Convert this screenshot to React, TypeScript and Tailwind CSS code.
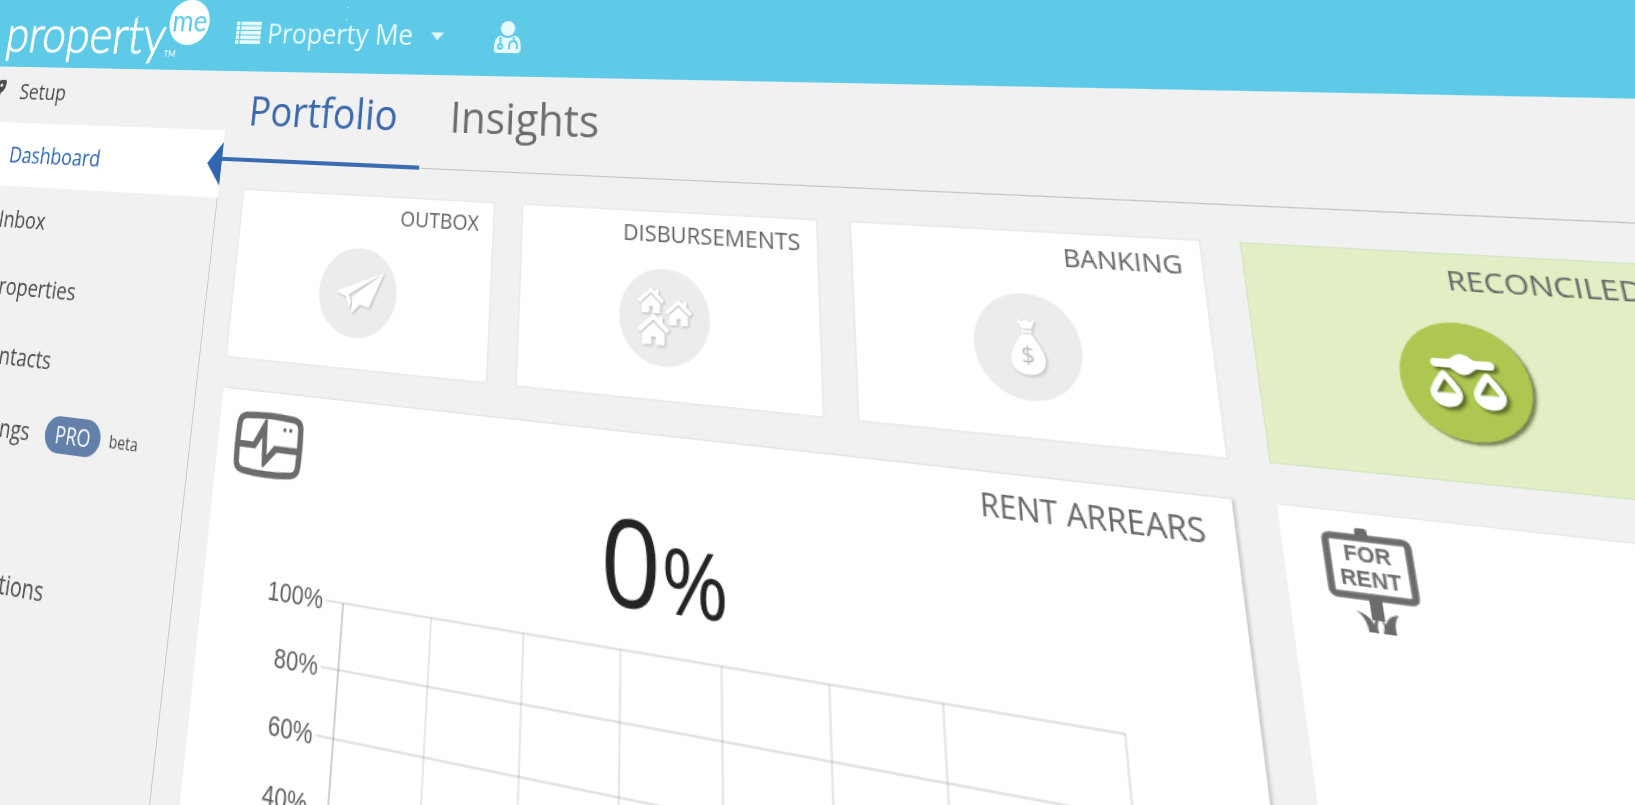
import type { ReactNode } from "react";
import { FaRocket } from "react-icons/fa";

const navItems = [
  { label: "Inbox" },
  { label: "Properties" },
  { label: "Contacts" },
  { label: "Listings", badge: "PRO", note: "beta" },
];

function PlaneIcon() {
  return (
    <svg viewBox="0 0 82 82" className="size-full" fill="#fff" aria-hidden="true">
      <path d="M68 21 18 41l11 4 39-24z" />
      <path d="M29 43.5l4 13 2-7-3-6z" />
      <path d="M68 21 36 45v15.5l8.500-9L54 54z" />
    </svg>
  );
}

function House({ x, y, s }: { x: number; y: number; s: number }) {
  return (
    <g transform={`translate(${x} ${y}) scale(${s})`}>
      <path d="M1 12.5 12 2.5l11 10" fill="none" stroke="#fff" strokeWidth="3.200" />
      <path d="M16 2h3v6l-3-2z" />
      <path d="M12 6.5l8.500 7.500V22H14v-5.500h-3.500V22h-7v-8z" />
    </g>
  );
}

function HousesIcon() {
  return (
    <svg viewBox="0 0 82 82" className="size-full" fill="#fff" aria-hidden="true">
      <House x={17} y={16} s={1} />
      <House x={42} y={25} s={1} />
      <House x={17} y={38} s={1.2} />
    </svg>
  );
}

function MoneyBagIcon() {
  return (
    <svg viewBox="0 0 82 82" className="size-full" fill="#fff" aria-hidden="true">
      <path d="M34 20l4 2 3-2 3 2 4-2-3 7.500h-8z" />
      <path d="M37 28.500h8v2h-8z" />
      <path d="M37 31.500h8c3 6 9 12 9 19 0 8-5 12-13 12s-13-4-13-12c0-7 6-13 9-19z" />
      <text
        x="41"
        y="54"
        textAnchor="middle"
        fontSize="18"
        fill="#bdbdbd"
        className="font-['Open_Sans',sans-serif]"
      >
        $
      </text>
    </svg>
  );
}

function ScalesIcon() {
  return (
    <svg viewBox="0 0 82 82" className="size-full" fill="#fff" aria-hidden="true">
      <path d="M24 26h8c3 0 4-4 9-4s6 4 9 4h8a3 3 0 0 1 0 6h-8c-3 0-4 4.500-9 4.500S35 32 32 32h-8a3 3 0 0 1 0-6z" />
      <path
        fillRule="evenodd"
        d="M28 34c1.500 0 10 11.500 10 16 0 5.500-4.500 9.500-10 9.500s-10-4-10-9.500c0-4.500 8.500-16 10-16zm0 6-6 9.500h12z"
      />
      <path
        fillRule="evenodd"
        d="M55 34c1.500 0 10 11.500 10 16 0 5.500-4.500 9.500-10 9.500s-10-4-10-9.500c0-4.500 8.500-16 10-16zm0 6-6 9.500h12z"
      />
    </svg>
  );
}

function MonitorIcon() {
  return (
    <svg
      viewBox="0 0 70 56"
      className="h-[58px] w-[73px]"
      fill="none"
      stroke="#6c6c6c"
      strokeWidth="5.500"
      aria-hidden="true"
    >
      <path d="M10 4.500Q35 1.500 60 4.500q6 1 6.500 7 1 16 0 32-.5 6-6.500 7-25 3-50 0-6-1-6.500-7-1-16 0-32 .5-6 6.500-7z" />
      <path
        d="M4 26h15L30 6h2l2 30 7-8.500h25V33H44L32 46h-2l-2-24-6 9.500H4z"
        fill="#6c6c6c"
        stroke="none"
      />
      <path d="M49 13.500h3M55 13.500h3" strokeWidth="3" />
    </svg>
  );
}

function ForRentIcon() {
  return (
    <svg viewBox="0 0 57 68" className="h-[68px] w-[57px]" fill="#6c6c6c" aria-hidden="true">
      <rect x="2.500" y="6.500" width="52" height="38" rx="3" fill="none" stroke="#6c6c6c" strokeWidth="4.500" />
      <path d="M22 5V2q0-2 2-2h4q2 0 2 2v3zM25 46h8v13h-8z" />
      <path d="M16 54q7 2 9 6l1 2q0-4 4-5-3 4-2 10h-6q0-8-6-13zM42 54q-6 1-8 5l-1 2q-1-3-3-4 3 4 1 10h8q-1-8 3-13z" />
      <g
        className="font-['Liberation_Sans',Arial,sans-serif] font-bold"
        fontSize="14"
        textAnchor="middle"
      >
        <text x="28" y="22">FOR</text>
        <text x="28" y="38">RENT</text>
      </g>
    </svg>
  );
}

function ListIcon() {
  return (
    <svg viewBox="0 0 30 24" className="h-6 w-[30px]" fill="currentColor" aria-hidden="true">
      {[0, 5, 10, 15, 20].map((y) => (
        <g key={y}>
          <rect x="0" y={y} width="4" height="3.900" />
          <rect x="5.500" y={y} width="24.500" height="3.900" />
        </g>
      ))}
    </svg>
  );
}

function UserIcon() {
  return (
    <svg viewBox="0 0 28 32" className="h-8 w-7" fill="currentColor" aria-hidden="true">
      <circle cx="14" cy="7.500" r="7.500" />
      <path d="M7 14.500q7 5 14 0 7 1 7 11.500v2q0 4-4 4H4q-4 0-4-4v-2q0-10.500 7-11.500z" />
      <g fill="none" stroke="#5ecae8" strokeWidth="2">
        <path d="M6.500 16v7.500" />
        <circle cx="6.500" cy="25.500" r="2.200" />
        <path d="M20.500 16v4M16 28v-3.500q0-4.500 4-4.500t4 4.500V28" />
      </g>
    </svg>
  );
}

function StatusCard({
  title,
  active = false,
  children,
}: {
  title: string;
  active?: boolean;
  children: ReactNode;
}) {
  return (
    <a
      href="#"
      className={
        active
          ? "flex h-[158px] flex-col items-center bg-[#e3eec4] pt-[7px] shadow-[0_0_0_1px_#d3e6c6]"
          : "flex h-[158px] flex-col items-center bg-white pt-[7px] shadow-[0_0_2px_1px_#e6e6e6]"
      }
    >
      <h2 className="self-end pr-[14px] text-[20px] leading-6 text-[#646464]">{title}</h2>
      <span
        className={
          active
            ? "mt-[18px] block size-[82px] rounded-full bg-[#adc750] shadow-[2px_2px_2px_rgba(60,70,30,0.65)]"
            : "mt-[18px] block size-[82px] rounded-full bg-[#ececec]"
        }
      >
        <span
          className={
            active
              ? "block size-full drop-shadow-[2px_2px_1px_rgba(50,60,20,0.7)]"
              : "block size-full drop-shadow-[1px_1px_1px_rgba(0,0,0,0.22)]"
          }
        >
          {children}
        </span>
      </span>
    </a>
  );
}

function ArrearsChart() {
  const ticks = ["100%", "80%", "60%", "40%", "20%", "0%"];
  const columns = [229, 314, 399, 483, 568, 653, 780];
  return (
    <svg viewBox="0 0 870 320" className="block w-full" role="img" aria-label="Rent arrears by period">
      {ticks.map((tick, i) => (
        <g key={tick}>
          <path d={`M127 ${21 + i * 52}H780`} stroke="#000" strokeOpacity="0.14" strokeWidth="1.300" />
          <text
            x="124"
            y={28 + i * 52}
            textAnchor="end"
            fontSize="22"
            fill="#5e5e5e"
            className="font-['Liberation_Sans',Arial,sans-serif]"
          >
            {tick}
          </text>
        </g>
      ))}
      <path d="M144 21V281" stroke="#000" strokeOpacity="0.28" strokeWidth="1.300" />
      {columns.map((x) => (
        <path key={x} d={`M${x} 21V281`} stroke="#000" strokeOpacity="0.14" strokeWidth="1.300" />
      ))}
    </svg>
  );
}

export default function App() {
  return (
    <div className="h-screen overflow-hidden bg-[#f1f1f1] font-['Open_Sans','Noto_Sans',sans-serif]">
      <div className="flex min-h-[960px] w-full origin-top-left flex-col bg-[#f1f1f1] [transform:matrix3d(0.801667,-0.0006,0,-0.00024633,-0.166333,0.961667,0,-0.000246667,0,0,1,0,-47.524,-22.282,0,1.15551)]">
        <header className="flex h-[100px] items-center bg-[#5ecae8] pt-[18px] text-[#e6fbff]">
          <a href="#" className="flex w-[380px] items-center pl-[82px] text-white">
            <span className="pt-1 font-['Lato',sans-serif] text-[57px] leading-[54px] font-light [-webkit-text-stroke:1px_white]">
              property
            </span>
            <span className="mb-2 self-end font-['Lato',sans-serif] text-[10px] leading-none">TM</span>
            <span className="mb-[22px] -ml-3 flex size-[50px] shrink-0 items-center justify-center rounded-full bg-white pb-1 font-['Lato',sans-serif] text-[32px] leading-[30px] text-[#5ecae8]">
              me
            </span>
          </a>
          <button type="button" className="flex items-center text-[29px] leading-9">
            <ListIcon />
            <span className="ml-2">Property Me</span>
            <svg viewBox="0 0 14 8" className="mt-1 ml-5 h-2 w-3.5" fill="currentColor" aria-hidden="true">
              <path d="M0 0h14L7 8z" />
            </svg>
          </button>
          <button type="button" aria-label="Account" className="mt-1 ml-[54px]">
            <UserIcon />
          </button>
        </header>

        <div className="flex flex-1">
          <nav className="w-[380px] shrink-0 border-r border-[#c6c6c6] text-[23px] text-[#4c4c4c]">
            <a href="#" className="-mr-px flex h-[62px] items-center gap-5 bg-[#f1f1f1] pb-2 pl-[69px]">
              <FaRocket className="size-6" />
              Setup
            </a>
            <a
              href="#"
              className="-mr-px flex h-[68px] items-center justify-between bg-white pl-[113px] text-[#2f66b0]"
            >
              Dashboard
              <svg viewBox="0 0 17 44" className="h-11 w-[17px]" fill="#2f66b0" aria-hidden="true">
                <path d="M17 0v44L0 22z" />
              </svg>
            </a>
            {navItems.map((item) => (
              <a key={item.label} href="#" className="flex h-[68px] items-center pl-[113px] last-of-type:mt-0">
                {item.label}
                {item.badge && (
                  <span className="ml-[19px] rounded-full bg-[#6380ab] px-3 text-[21px] leading-[34px] font-medium text-white">
                    {item.badge}
                  </span>
                )}
                {item.note && <span className="ml-2.5 text-[16px]">{item.note}</span>}
              </a>
            ))}
            <a href="#" className="mt-[70px] flex h-[68px] items-center pl-[114px]">
              Inspections
            </a>
          </nav>

          <main className="flex-1">
            <div className="flex gap-1 border-b border-[#c4c4c4] text-[42px] leading-[56px]">
              <a href="#" className="-mb-[2px] border-b-4 border-[#3a6cb2] px-[26px] pt-3 pb-[21px] text-[#3a69ac]">
                Portfolio
              </a>
              <a href="#" className="px-[26px] pt-3 text-[#6c6c6c]">
                Insights
              </a>
            </div>

            <div className="grid grid-cols-4 gap-x-[30px] gap-y-[29px] pt-[29px] pr-[55px] pl-[30px]">
              <StatusCard title="OUTBOX">
                <PlaneIcon />
              </StatusCard>
              <StatusCard title="DISBURSEMENTS">
                <HousesIcon />
              </StatusCard>
              <StatusCard title="BANKING">
                <MoneyBagIcon />
              </StatusCard>
              <StatusCard title="RECONCILED" active>
                <ScalesIcon />
              </StatusCard>

              <section className="col-span-3 bg-white shadow-[2px_0_2px_rgba(0,0,0,0.16)]">
                <div className="flex h-[53px] items-start justify-between pl-[18px]">
                  <span className="pt-[17px]">
                    <MonitorIcon />
                  </span>
                  <h2 className="pt-2 pr-5 text-[23px] leading-[30px] text-[#646464]">RENT ARREARS</h2>
                </div>
                <p className="text-center text-[92px] leading-[92px] text-[#242424]">
                  0<span className="text-[68px] leading-none">%</span>
                </p>
                <ArrearsChart />
              </section>

              <section className="bg-white pt-2.5 pl-[26px] shadow-[1px_0_2px_rgba(0,0,0,0.1)]" aria-label="Vacancies">
                <ForRentIcon />
              </section>
            </div>
          </main>
        </div>
      </div>
    </div>
  );
}
